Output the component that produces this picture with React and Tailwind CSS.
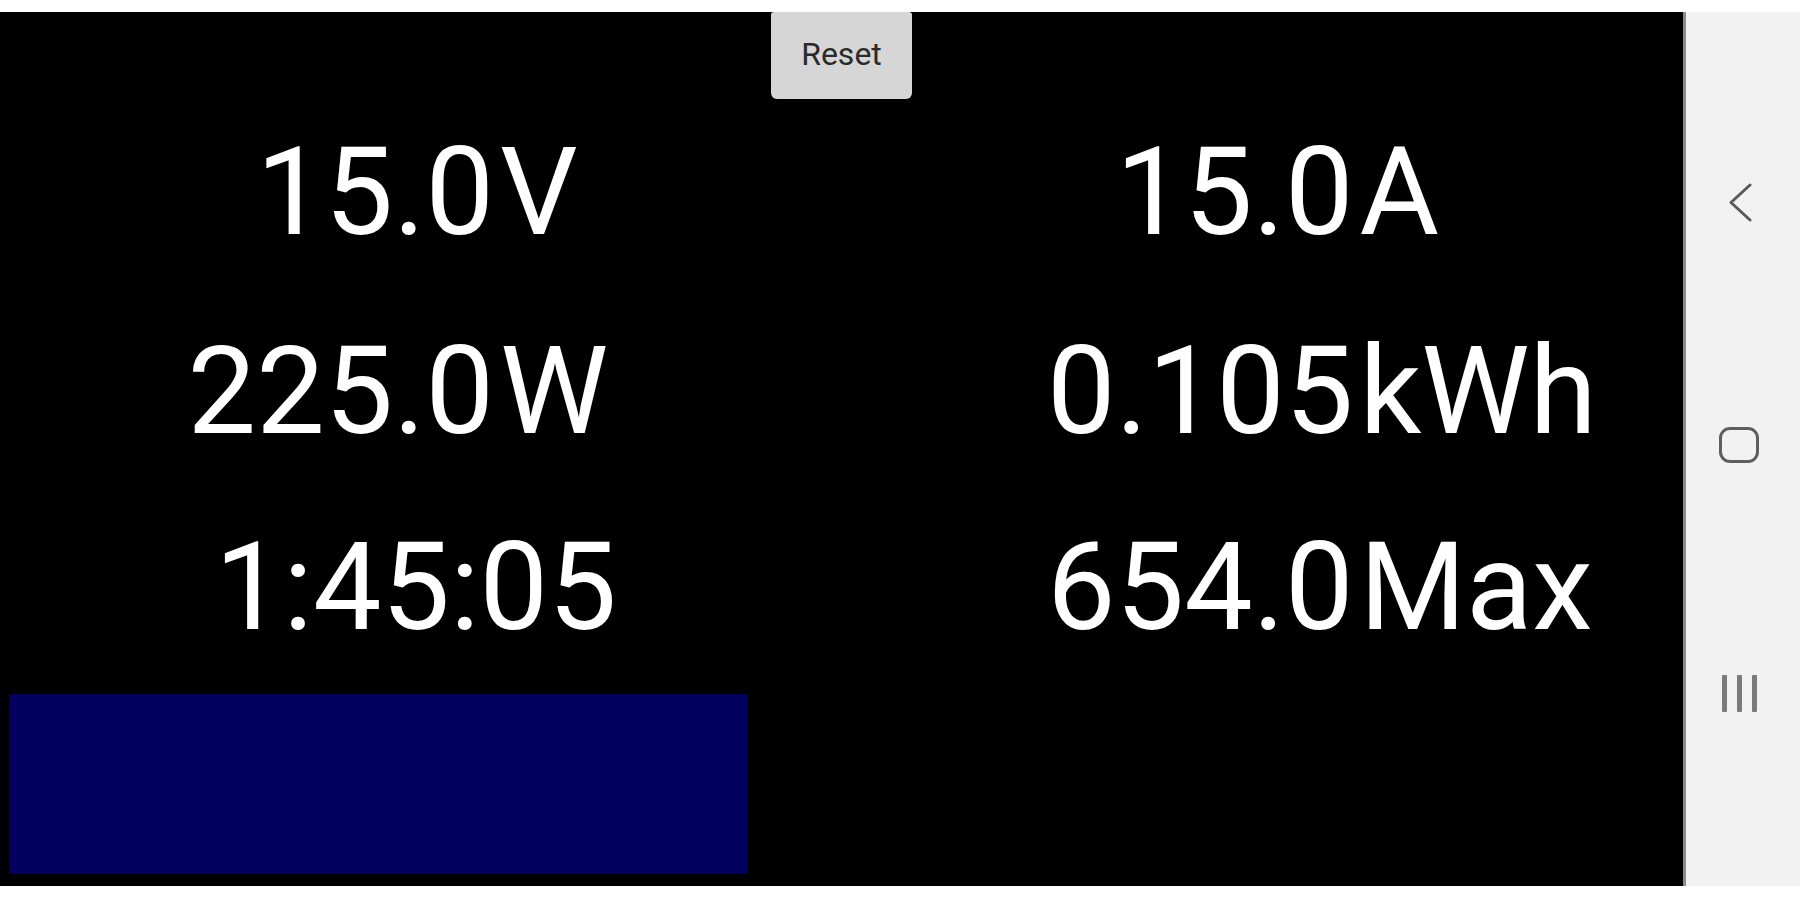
import React from 'react';

const font = { fontFamily: 'Roboto, "Noto Sans", sans-serif' };

const Reading = ({ value, unit, offset }) => (
  <div className={`flex items-baseline ${offset}`}>
    <span className="w-[330px] text-right">{value}</span>
    <span className="ml-[6px]">{unit}</span>
  </div>
);

const NavBar = () => (
  <div className="w-[114px] bg-[#f2f2f2] flex flex-col items-center pt-[171px] pr-[8px]">
    <svg width="25" height="39" viewBox="0 0 25 39" className="ml-[2px]">
      <path d="M22 2 L3 19.5 L22 37" fill="none" stroke="#5a5a5a" strokeWidth="3" strokeLinecap="round" strokeLinejoin="round" />
    </svg>
    <div className="mt-[205px] w-[40px] h-[36px] rounded-[11px] border-[3px] border-[#5e5e5e]" />
    <div className="mt-[212px] flex gap-[10px] h-[37px]">
      <div className="w-[5px] h-full bg-[#7a7a7a] rounded-[1px]" />
      <div className="w-[5px] h-full bg-[#7a7a7a] rounded-[1px]" />
      <div className="w-[5px] h-full bg-[#7a7a7a] rounded-[1px]" />
    </div>
  </div>
);

export default function App() {
  return (
    <div className="w-[1800px] h-[900px] bg-white pt-[12px] overflow-hidden" style={font}>
      <div className="flex h-[874px]">
        <div className="w-[1683px] bg-black flex flex-col text-white">
          <button className="self-center w-[141px] h-[87px] bg-[#d6d6d6] rounded-b-[6px] rounded-t-[3px] text-[32px] text-[#2a2a2a] leading-none pb-[4px]">
            Reset
          </button>

          <div className="mt-[33px] flex flex-col text-[122px] leading-none">
            <div className="grid grid-cols-2">
              <Reading value="15.0" unit="V" offset="pl-[164px]" />
              <Reading value="15.0" unit="A" offset="pl-[182px]" />
            </div>
            <div className="grid grid-cols-2 mt-[77px]">
              <Reading value="225.0" unit="W" offset="pl-[164px]" />
              <Reading value="0.105" unit="kWh" offset="pl-[182px]" />
            </div>
            <div className="grid grid-cols-2 mt-[74px]">
              <div className="text-center pr-[10px]">1:45:05</div>
              <Reading value="654.0" unit="Max" offset="pl-[182px]" />
            </div>
          </div>

          <div className="mt-[45px] ml-[9px] w-[739px] h-[180px] bg-[#01005f]" />
        </div>
        <div className="w-[3px] bg-[#8a8a8a]" />
        <NavBar />
      </div>
    </div>
  );
}
